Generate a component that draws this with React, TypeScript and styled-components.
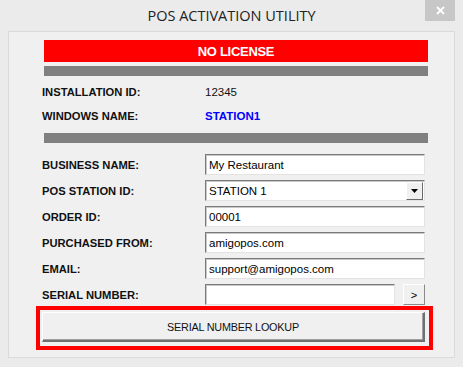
import styled, { createGlobalStyle } from 'styled-components'

const Global = createGlobalStyle`
  html, body {
    margin: 0;
    padding: 0;
    background: #ebebeb;
  }
  body {
    font-family: "Liberation Sans", Arial, sans-serif;
    color: #000;
  }
`

const Window = styled.div`
  width: 463px;
  height: 367px;
  display: flex;
  flex-direction: column;
  background: #ebebeb;
  box-sizing: border-box;
`

const TitleBar = styled.div`
  height: 31px;
  position: relative;
  display: flex;
  align-items: center;
  justify-content: center;
`

const Title = styled.div`
  font-family: "Open Sans", "Liberation Sans", sans-serif;
  font-size: 14.5px;
  color: #222;
  margin-top: -1px;
`

const Close = styled.div`
  position: absolute;
  top: 0;
  right: 8px;
  width: 30px;
  height: 21px;
  background: #c7c7c7;
  color: #fff;
  display: flex;
  align-items: center;
  justify-content: center;
`

const Panel = styled.div`
  margin: 0 8px;
  height: 327px;
  box-sizing: border-box;
  border: 1px solid #dadada;
  background: #f0f0f0;
  padding: 8px 26px 0 35px;
  display: flex;
  flex-direction: column;
`

const Banner = styled.div`
  height: 22px;
  background: #ff0000;
  color: #fff;
  font-weight: bold;
  font-size: 13px;
  letter-spacing: -0.3px;
  display: flex;
  align-items: center;
  justify-content: center;
`

const Divider = styled.div<{ $top: number }>`
  height: 10px;
  background: #808080;
  margin-top: ${p => p.$top}px;
`

const InfoBlock = styled.div`
  margin-top: 4px;
`

const InfoRow = styled.div`
  height: 24px;
  display: grid;
  grid-template-columns: 163px 1fr;
  align-items: center;
  margin-left: -2px;
`

const Label = styled.div`
  font-weight: bold;
  font-size: 11.2px;
  color: #111;
`

const Value = styled.div<{ $blue?: boolean }>`
  font-size: 11.5px;
  color: ${p => (p.$blue ? '#0000ff' : '#111')};
  font-weight: ${p => (p.$blue ? 'bold' : 'normal')};
`

const Form = styled.div`
  display: flex;
  flex-direction: column;
  gap: 5px;
  margin-top: 11px;
`

const FormRow = styled.div`
  height: 21px;
  display: grid;
  grid-template-columns: 163px 220px;
  align-items: center;
  margin-left: -2px;
`

const Field = styled.div<{ $width?: number }>`
  height: 21px;
  width: ${p => (p.$width ? `${p.$width}px` : 'auto')};
  box-sizing: border-box;
  background: #fff;
  border-top: 1px solid #7a7a7a;
  border-left: 1px solid #7a7a7a;
  border-right: 1px solid #e3e3e3;
  border-bottom: 1px solid #e3e3e3;
  box-shadow: inset 1px 1px 0 #c8c8c8;
  font-size: 11.5px;
  padding: 0 3px;
  display: flex;
  align-items: center;
  white-space: nowrap;
`

const SelectField = styled(Field)`
  justify-content: space-between;
  padding-right: 1px;
`

const DropButton = styled.div`
  width: 17px;
  height: 18px;
  box-sizing: border-box;
  background: #f0f0f0;
  border-top: 1px solid #fff;
  border-left: 1px solid #fff;
  border-right: 1px solid #6a6a6a;
  border-bottom: 1px solid #6a6a6a;
  display: flex;
  align-items: center;
  justify-content: center;
`

const SerialWrap = styled.div`
  display: flex;
  gap: 8px;
`

const SmallButton = styled.div`
  width: 22px;
  height: 21px;
  box-sizing: border-box;
  background: #f0f0f0;
  border-top: 1px solid #fff;
  border-left: 1px solid #fff;
  border-right: 1px solid #8a8a8a;
  border-bottom: 1px solid #8a8a8a;
  font-size: 11px;
  display: flex;
  align-items: center;
  justify-content: center;
`

const LookupFrame = styled.div`
  margin: 1px -5px 0 -8px;
  border: 4px solid #ff0000;
  padding: 2px 4px 4px 2px;
`

const LookupButton = styled.div`
  height: 30px;
  box-sizing: border-box;
  background: #f0f0f0;
  border-top: 1px solid #fff;
  border-left: 1px solid #fff;
  border-right: 2px solid #6f6f6f;
  border-bottom: 2px solid #6f6f6f;
  box-shadow: inset -1px -1px 0 #a0a0a0;
  font-size: 10.8px;
  letter-spacing: -0.2px;
  color: #111;
  display: flex;
  align-items: center;
  justify-content: center;
`

const formRows: [string, string][] = [
  ['BUSINESS NAME:', 'My Restaurant'],
  ['ORDER ID:', '00001'],
  ['PURCHASED FROM:', 'amigopos.com'],
  ['EMAIL:', 'support@amigopos.com'],
]

function App() {
  return (
    <Window>
      <Global />
      <TitleBar>
        <Title>POS ACTIVATION UTILITY</Title>
        <Close>
          <svg width="9" height="9" viewBox="0 0 9 9">
            <path d="M1 1L8 8M8 1L1 8" stroke="#fff" strokeWidth="1.8" />
          </svg>
        </Close>
      </TitleBar>
      <Panel>
        <Banner>NO LICENSE</Banner>
        <Divider $top={4} />
        <InfoBlock>
          <InfoRow>
            <Label>INSTALLATION ID:</Label>
            <Value>12345</Value>
          </InfoRow>
          <InfoRow>
            <Label>WINDOWS NAME:</Label>
            <Value $blue>STATION1</Value>
          </InfoRow>
        </InfoBlock>
        <Divider $top={5} />
        <Form>
          <FormRow>
            <Label>{formRows[0][0]}</Label>
            <Field>{formRows[0][1]}</Field>
          </FormRow>
          <FormRow>
            <Label>POS STATION ID:</Label>
            <SelectField>
              STATION 1
              <DropButton>
                <svg width="7" height="4" viewBox="0 0 7 4">
                  <path d="M0 0H7L3.5 4Z" fill="#000" />
                </svg>
              </DropButton>
            </SelectField>
          </FormRow>
          {formRows.slice(1).map(([l, v]) => (
            <FormRow key={l}>
              <Label>{l}</Label>
              <Field>{v}</Field>
            </FormRow>
          ))}
          <FormRow>
            <Label>SERIAL NUMBER:</Label>
            <SerialWrap>
              <Field $width={190} />
              <SmallButton>&gt;</SmallButton>
            </SerialWrap>
          </FormRow>
        </Form>
        <LookupFrame>
          <LookupButton>SERIAL NUMBER LOOKUP</LookupButton>
        </LookupFrame>
      </Panel>
    </Window>
  )
}

export default App
